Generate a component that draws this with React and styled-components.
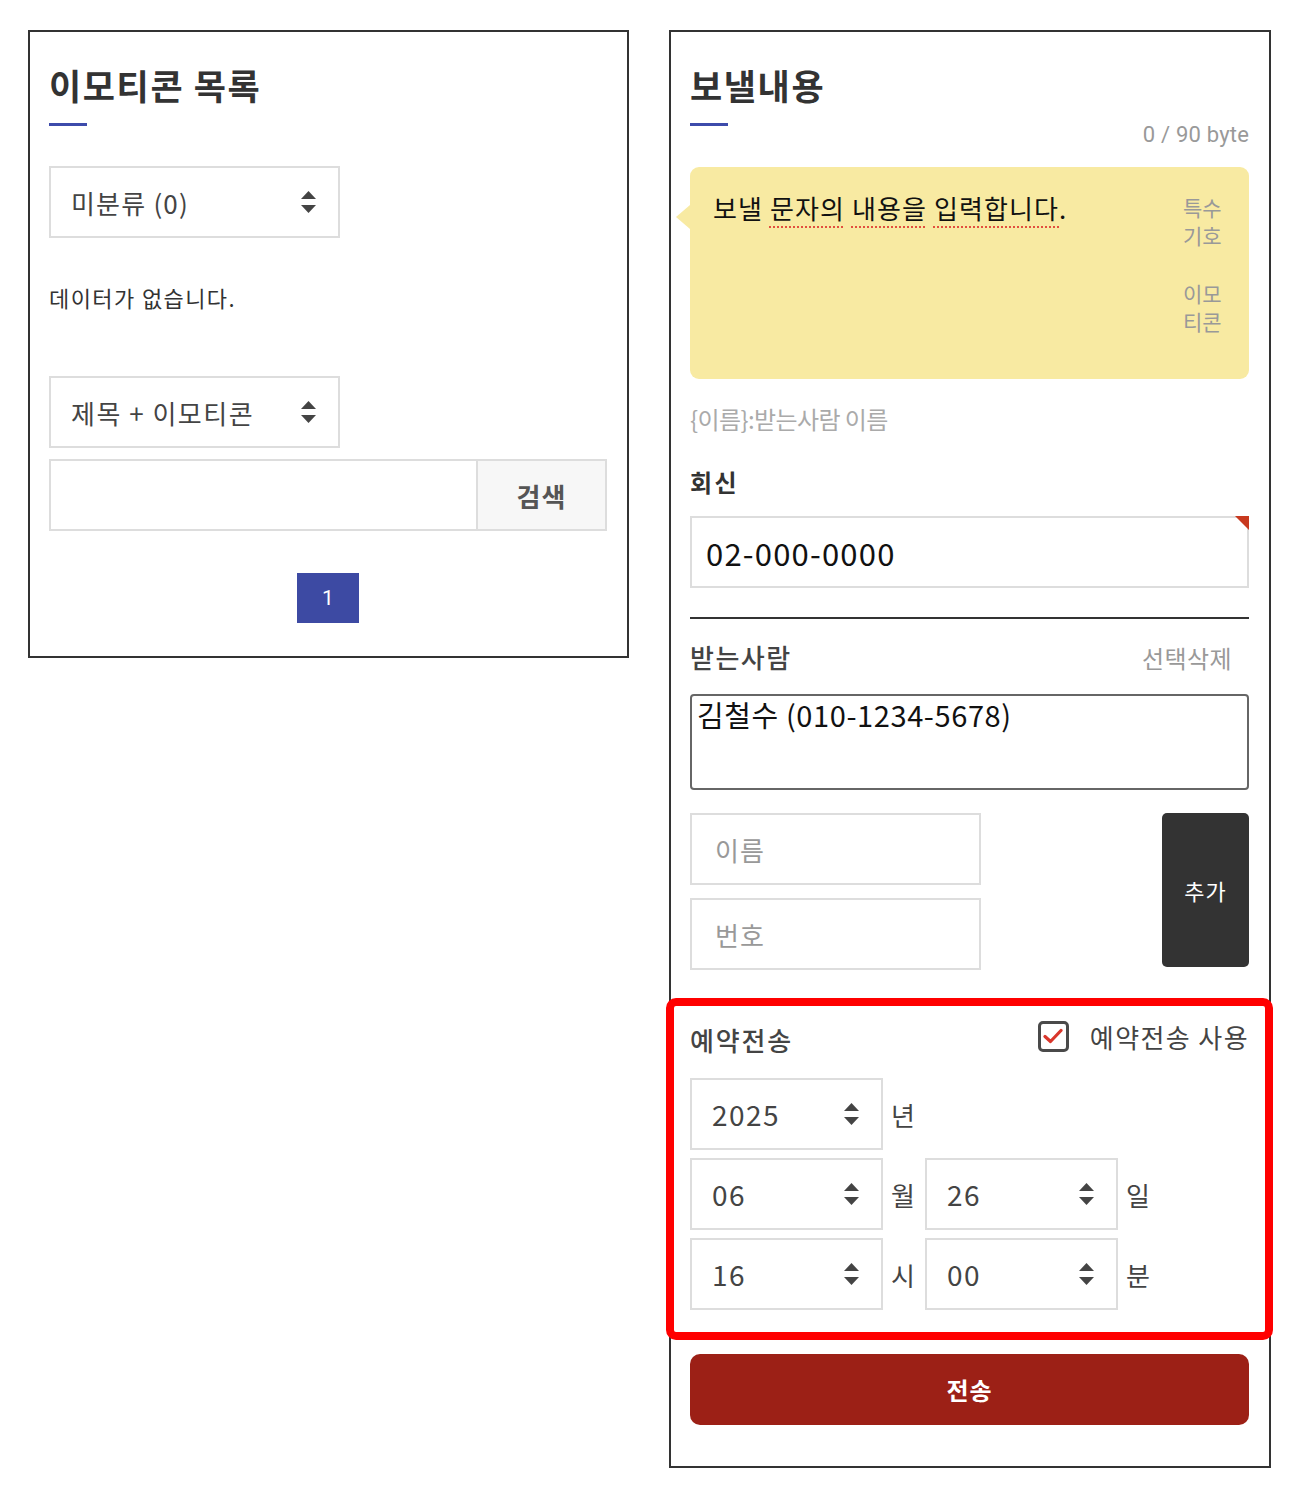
import React from "react";
import styled, { createGlobalStyle } from "styled-components";

const Global = createGlobalStyle`
  * { box-sizing: border-box; }
  body {
    margin: 0;
    background: #fff;
    font-family: "Noto Sans CJK KR", "Noto Sans", sans-serif;
    color: #333;
  }
`;

const Page = styled.div`
  display: flex;
  align-items: flex-start;
  gap: 40px;
  padding: 30px 0 40px 28px;
`;

const Panel = styled.section`
  width: ${(p) => p.$w}px;
  border: 2px solid #333;
  padding: 30px 20px ${(p) => p.$pb}px 19px;
  background: #fff;
`;

const Title = styled.h2`
  margin: 0;
  font-size: 35px;
  line-height: 46px;
  font-weight: 700;
  color: #333;
  letter-spacing: 1.6px;
`;

const Bar = styled.div`
  width: 38px;
  height: 3px;
  margin-top: 15px;
  background: #3d4bab;
`;

const SelectBox = styled.div`
  display: flex;
  align-items: center;
  width: ${(p) => p.$w}px;
  height: 72px;
  margin-top: ${(p) => p.$mt || 0}px;
  border: 2px solid #ddd;
  background: #fff;
  padding-right: ${(p) => p.$ar || 22}px;
`;

const NativeSelect = styled.select`
  flex: 1;
  min-width: 0;
  height: 100%;
  appearance: none;
  -webkit-appearance: none;
  border: none;
  outline: none;
  background: transparent;
  padding-left: ${(p) => p.$pl || 20}px;
  font-family: inherit;
  font-size: ${(p) => p.$fs || 26}px;
  letter-spacing: ${(p) => p.$ls ?? 1.2}px;
  color: #444;
`;

const Arrows = ({ color = "#444" }) => (
  <svg width="15" height="22" viewBox="0 0 15 22">
    <polygon points="7.5,0 15,8 0,8" fill={color} />
    <polygon points="0,14 15,14 7.5,22" fill={color} />
  </svg>
);

const Select = ({ w, mt, value, options, fs, pl, ar, ls }) => (
  <SelectBox $w={w} $mt={mt} $ar={ar}>
    <NativeSelect defaultValue={value} $fs={fs} $pl={pl} $ls={ls}>
      {options.map((o) => (
        <option key={o} value={o}>
          {o}
        </option>
      ))}
    </NativeSelect>
    <Arrows />
  </SelectBox>
);

const Empty = styled.p`
  margin: 44px 0 0;
  font-size: 22px;
  line-height: 30px;
  color: #333;
  letter-spacing: 1.4px;
`;

const SearchRow = styled.div`
  display: flex;
  height: 72px;
  margin-top: 11px;
  border: 2px solid #ddd;
`;

const SearchInput = styled.input`
  flex: 1;
  min-width: 0;
  border: none;
  outline: none;
  padding: 0 16px;
  font-family: inherit;
  font-size: 24px;
`;

const SearchButton = styled.button`
  width: 129px;
  border: none;
  border-left: 2px solid #ddd;
  background: #f7f7f7;
  font-family: inherit;
  font-size: 26px;
  font-weight: 700;
  letter-spacing: 1px;
  color: #555;
  cursor: pointer;
`;

const Pager = styled.div`
  display: flex;
  justify-content: center;
  margin-top: 42px;
`;

const PageButton = styled.button`
  width: 62px;
  height: 50px;
  border: none;
  background: #3d4aa3;
  color: #fff;
  font-family: "Roboto", "Noto Sans", sans-serif;
  font-size: 21px;
`;

const Counter = styled.div`
  margin-top: -3px;
  text-align: right;
  font-family: "Roboto", "Noto Sans CJK KR", sans-serif;
  font-size: 22px;
  line-height: 24px;
  color: #999;
  letter-spacing: 0.2px;
`;

const Memo = styled.div`
  position: relative;
  display: flex;
  height: 212px;
  margin-top: 20px;
  background: #f8eaa2;
  border-radius: 9px;

  &::before {
    content: "";
    position: absolute;
    left: -14px;
    top: 38px;
    border-style: solid;
    border-width: 12px 14px 12px 0;
    border-color: transparent #f8eaa2 transparent transparent;
  }
`;

const MemoText = styled.div`
  flex: 1;
  padding: 23px 0 0 23px;
  font-size: 26px;
  line-height: 36px;
  color: #111;
  letter-spacing: 1.1px;
`;

const Spell = styled.span`
  text-decoration: underline dotted #e2503f;
  text-decoration-thickness: 2px;
  text-underline-offset: 7px;
`;

const MemoSide = styled.div`
  display: flex;
  flex-direction: column;
  gap: 30px;
  width: 66px;
  padding-top: 26px;
`;

const SideButton = styled.button`
  width: 42px;
  padding: 0;
  border: none;
  background: transparent;
  text-align: left;
  font-family: inherit;
  font-size: 21px;
  line-height: 28px;
  color: #999;
  cursor: pointer;
`;

const Hint = styled.p`
  margin: 25px 0 0;
  font-size: 24px;
  line-height: 30px;
  color: #aaa;
  letter-spacing: -0.6px;
`;

const Label = styled.div`
  margin-top: ${(p) => p.$mt || 0}px;
  font-size: ${(p) => p.$fs || 24}px;
  line-height: 30px;
  font-weight: ${(p) => p.$fw || 700};
  color: ${(p) => p.$c || "#333"};
  letter-spacing: ${(p) => p.$ls ?? 1.5}px;
`;

const InputWrap = styled.div`
  position: relative;
  margin-top: 19px;

  &::after {
    content: "";
    position: absolute;
    top: 0;
    right: 0;
    border-style: solid;
    border-width: 0 14px 14px 0;
    border-color: transparent #c8391f transparent transparent;
  }
`;

const TextInput = styled.input`
  display: block;
  width: ${(p) => (p.$w ? `${p.$w}px` : "100%")};
  height: 72px;
  border: 2px solid #ddd;
  outline: none;
  padding: 0 ${(p) => p.$pl || 14}px;
  font-family: inherit;
  font-size: ${(p) => p.$fs || 28}px;
  color: #111;
  letter-spacing: ${(p) => p.$ls ?? 0}px;
  &::placeholder {
    color: #999;
  }
`;

const Divider = styled.hr`
  margin: 29px 0 0;
  border: none;
  height: 2px;
  background: #333;
`;

const RowBetween = styled.div`
  display: flex;
  justify-content: space-between;
  align-items: center;
  margin-top: ${(p) => p.$mt || 0}px;
  height: 32px;
`;

const LinkButton = styled.button`
  margin-right: 17px;
  padding: 0;
  border: none;
  background: transparent;
  font-family: inherit;
  font-size: 24px;
  color: #999;
  letter-spacing: 0.4px;
  cursor: pointer;
`;

const Recipients = styled.textarea`
  display: block;
  width: 100%;
  height: 96px;
  margin-top: 21px;
  border: 2px solid #666;
  border-radius: 4px;
  padding: 0 5px;
  resize: none;
  outline: none;
  font-family: inherit;
  font-size: 29px;
  line-height: 36px;
  letter-spacing: 0.6px;
  color: #111;
`;

const AddRow = styled.div`
  display: flex;
  justify-content: space-between;
  align-items: flex-start;
  margin-top: 23px;
`;

const AddFields = styled.div`
  display: flex;
  flex-direction: column;
  gap: 13px;
`;

const AddButton = styled.button`
  width: 87px;
  height: 154px;
  border: none;
  border-radius: 5px;
  background: #333;
  color: #fff;
  font-family: inherit;
  font-size: 22px;
  letter-spacing: 1px;
  cursor: pointer;
`;

const Reserve = styled.div`
  margin: 36px -16px 0;
  padding: 18px 16px 22px;
  outline: 8px solid #ff0000;
  border-radius: 2px;
`;

const CheckLabel = styled.label`
  display: flex;
  align-items: center;
  gap: 21px;
  margin-top: -8px;
  font-size: 26px;
  color: #444;
  letter-spacing: 1.4px;
`;

const CheckBox = styled.span`
  display: flex;
  align-items: center;
  justify-content: center;
  width: 31px;
  height: 31px;
  border: 3px solid #4a4a4a;
  border-radius: 5px;
`;

const DateGrid = styled.div`
  display: grid;
  grid-template-columns: 193px 26px 193px 26px;
  column-gap: 8px;
  row-gap: 8px;
  align-items: center;
  margin-top: 22px;
`;

const Unit = styled.span`
  font-size: 26px;
  color: #444;
`;

const SendButton = styled.button`
  display: block;
  width: 100%;
  height: 71px;
  margin-top: 22px;
  border: none;
  border-radius: 10px;
  background: #9c2016;
  color: #fff;
  font-family: inherit;
  font-size: 24px;
  font-weight: 700;
  letter-spacing: 1px;
  cursor: pointer;
`;

const nums = (a, b, pad) =>
  Array.from({ length: b - a + 1 }, (_, i) => String(a + i).padStart(pad, "0"));

export default function App() {
  return (
    <>
      <Global />
      <Page>
        <Panel $w={601} $pb={33}>
          <Title>이모티콘 목록</Title>
          <Bar />
          <Select w={291} mt={40} value="미분류 (0)" options={["미분류 (0)"]} />
          <Empty>데이터가 없습니다.</Empty>
          <Select
            w={291}
            mt={64}
            value="제목 + 이모티콘"
            options={["제목 + 이모티콘", "제목", "이모티콘"]}
            ls={1.5}
          />
          <SearchRow>
            <SearchInput type="text" />
            <SearchButton>검색</SearchButton>
          </SearchRow>
          <Pager>
            <PageButton>1</PageButton>
          </Pager>
        </Panel>

        <Panel $w={602} $pb={41}>
          <Title>보낼내용</Title>
          <Bar />
          <Counter>0 / 90 byte</Counter>
          <Memo>
            <MemoText>
              보낼 <Spell>문자의</Spell> <Spell>내용을</Spell>{" "}
              <Spell>입력합니다</Spell>.
            </MemoText>
            <MemoSide>
              <SideButton>특수 기호</SideButton>
              <SideButton>이모 티콘</SideButton>
            </MemoSide>
          </Memo>
          <Hint>{"{이름}:받는사람 이름"}</Hint>
          <Label $mt={33} $ls={2.5}>
            회신
          </Label>
          <InputWrap>
            <TextInput defaultValue="02-000-0000" $pl={14} $fs={31} $ls={1.2} />
          </InputWrap>
          <Divider />
          <RowBetween $mt={22}>
            <Label $fs={26} $fw={500} $c="#444">
              받는사람
            </Label>
            <LinkButton>선택삭제</LinkButton>
          </RowBetween>
          <Recipients readOnly value="김철수 (010-1234-5678)" />
          <AddRow>
            <AddFields>
              <TextInput $w={291} $pl={23} $fs={26} $ls={1} placeholder="이름" />
              <TextInput $w={291} $pl={23} $fs={26} $ls={1} placeholder="번호" />
            </AddFields>
            <AddButton>추가</AddButton>
          </AddRow>

          <Reserve>
            <RowBetween>
              <Label $fs={26} $fw={500} $c="#444" $ls={1.8}>
                예약전송
              </Label>
              <CheckLabel>
                <CheckBox>
                  <svg width="20" height="16" viewBox="0 0 20 16">
                    <path
                      d="M2 8.5 L7.5 13.5 L18 2.5"
                      fill="none"
                      stroke="#d9362b"
                      strokeWidth="3.2"
                      strokeLinecap="round"
                      strokeLinejoin="round"
                    />
                  </svg>
                </CheckBox>
                예약전송 사용
              </CheckLabel>
            </RowBetween>
            <DateGrid>
              <Select w={193} value="2025" options={nums(2024, 2027, 4)} fs={28} ar={22} ls={1.5} />
              <Unit>년</Unit>
              <span />
              <span />
              <Select w={193} value="06" options={nums(1, 12, 2)} fs={28} ar={22} ls={1.5} />
              <Unit>월</Unit>
              <Select w={193} value="26" options={nums(1, 31, 2)} fs={28} ar={22} ls={1.5} />
              <Unit>일</Unit>
              <Select w={193} value="16" options={nums(0, 23, 2)} fs={28} ar={22} ls={1.5} />
              <Unit>시</Unit>
              <Select w={193} value="00" options={nums(0, 59, 2)} fs={28} ar={22} ls={1.5} />
              <Unit>분</Unit>
            </DateGrid>
          </Reserve>

          <SendButton>전송</SendButton>
        </Panel>
      </Page>
    </>
  );
}
